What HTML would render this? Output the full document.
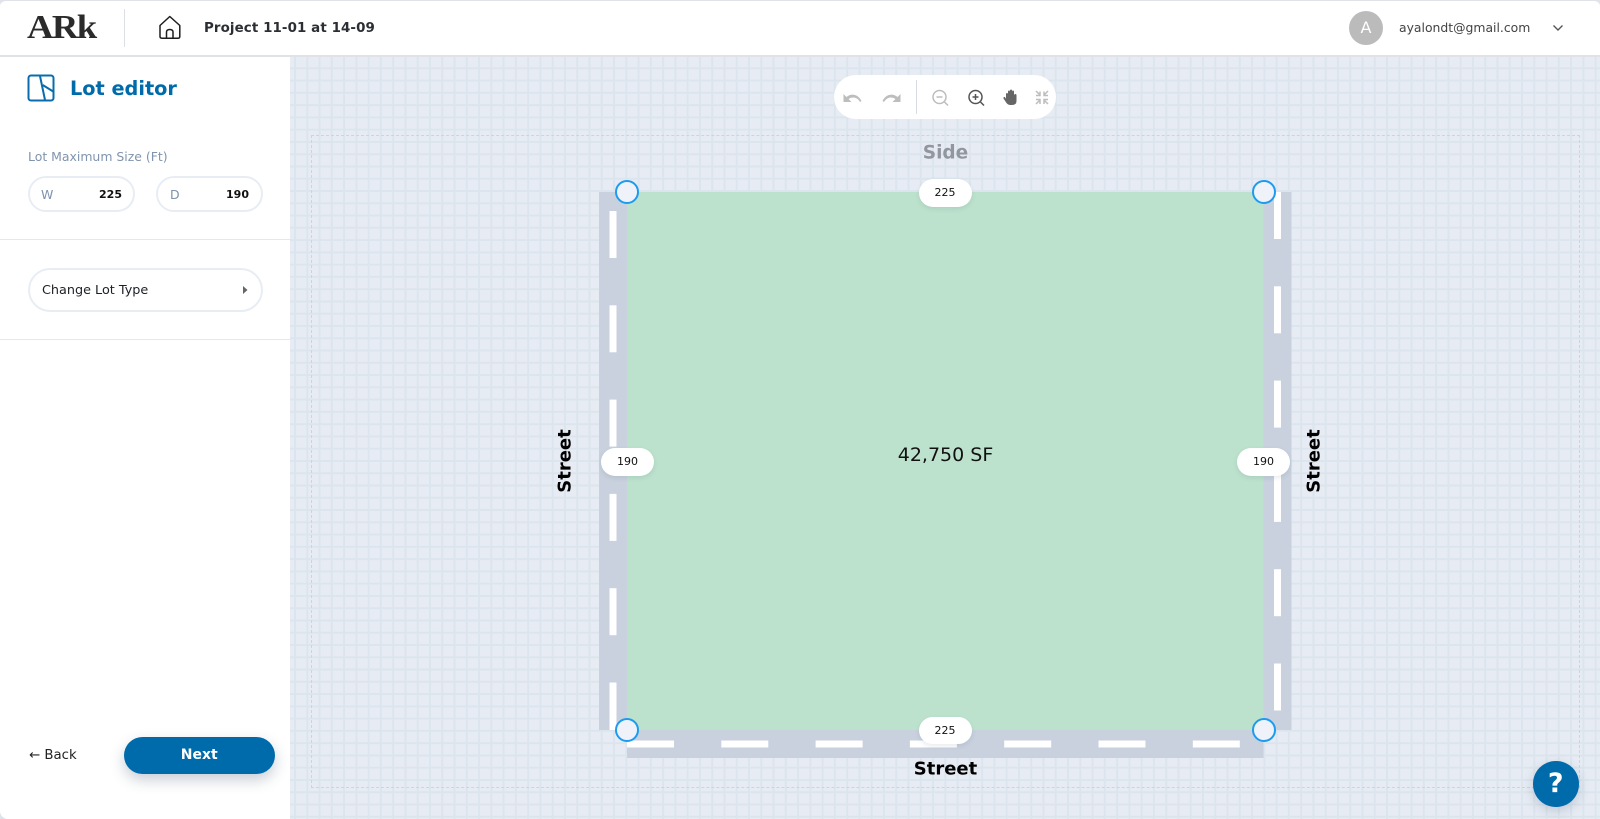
<!DOCTYPE html>
<html><head><meta charset="utf-8"><style>
*{box-sizing:border-box}
html,body{margin:0;padding:0;width:1600px;height:819px;overflow:hidden;background:#dfe4ea}
body{font-family:"DejaVu Sans","Liberation Sans",sans-serif;position:relative}
.a{position:absolute;white-space:nowrap}
.pill{position:absolute;width:53px;height:27.5px;background:#fff;border-radius:14px;font-size:11px;color:#111;text-align:center;line-height:27.5px;box-shadow:0 2px 5px rgba(60,80,110,.12)}
.h{position:absolute;width:24px;height:24px;border-radius:50%;background:#eff3f9;border:2px solid #1c9bf0}
.inp{position:absolute;height:36px;top:176px;width:107px;border:2px solid #e8edf4;border-radius:18px;background:#fff}
.st{font-weight:700;font-size:18px;color:#000;transform:translate(-50%,-50%) rotate(-90deg)}
</style></head><body>
<svg class="a" style="left:290px;top:57px" width="1310" height="762">
<defs><pattern id="g" patternUnits="userSpaceOnUse" width="12.27" height="12.27" x="4" y="10.3"><rect width="12.27" height="12.27" fill="#e7ecf4"/><rect width="2" height="12.27" fill="#dce5ed"/><rect width="12.27" height="2" fill="#dce5ed"/></pattern></defs>
<rect width="1310" height="762" fill="url(#g)"/></svg>
<div class="a" style="left:311px;top:135px;width:1269px;height:653px;border:1px dashed #cfd4db"></div>

<div class="a" style="left:0;top:0;width:1600px;height:57px;background:#fff;border-top:1px solid #dfe3e8;border-bottom:2px solid #dfe3e8;border-radius:6px 6px 0 0"></div>
<div class="a" style="left:0;top:57px;width:290px;height:762px;background:#fff;border-radius:0 0 0 8px"></div>

<div class="a" style="left:27px;top:8px;font-family:'Liberation Serif',serif;font-weight:700;font-size:34px;line-height:40px;color:#2b2b2b;letter-spacing:-1.5px;transform-origin:left center;transform:scaleX(1.08)">ARk</div>
<div class="a" style="left:124px;top:9px;width:1px;height:38px;background:#dcdfe3"></div>
<svg class="a" style="left:158px;top:15px" width="24" height="25" viewBox="0 0 24 25" fill="none" stroke="#1e1e1e" stroke-width="1.5" stroke-linejoin="round"><path d="M2 10.5 11.8 1.5 21.8 10.5V21.5Q21.8 23.2 20 23.2H4Q2 23.2 2 21.5Z"/><path d="M8.500 23V17Q8.500 14.500 11.800 14.500 15 14.500 15 17V23"/></svg>
<div class="a" style="left:204px;top:19px;font-weight:700;font-size:13.4px;line-height:20px;color:#2b2e33;letter-spacing:.1px">Project 11-01 at 14-09</div>

<div class="a" style="left:1349px;top:11px;width:34px;height:34px;border-radius:50%;background:#bbb;color:#fff;font-size:16px;line-height:34px;text-align:center">A</div>
<div class="a" style="left:1399px;top:19px;font-size:12.4px;line-height:18px;color:#444">ayalondt@gmail.com</div>
<svg class="a" style="left:1552px;top:24px" width="12" height="8" viewBox="0 0 12 8" fill="none" stroke="#555" stroke-width="1.4"><path d="M1.500 1.500 6 6 10.500 1.500"/></svg>

<svg class="a" style="left:27px;top:74px" width="28" height="28" viewBox="0 0 28 28" fill="none" stroke="#0a6cad" stroke-width="2"><rect x="1.500" y="1.500" width="25" height="25" rx="2.500"/><path d="M13 2 18 26M15.700 11 27 18"/></svg>
<div class="a" style="left:70px;top:76px;font-weight:700;font-size:19.3px;line-height:26px;color:#006bab">Lot editor</div>

<div class="a" style="left:28px;top:149px;font-size:12.45px;line-height:16px;color:#8094ae">Lot Maximum Size (Ft)</div>
<div class="inp" style="left:28px"></div>
<div class="inp" style="left:156px"></div>
<div class="a" style="left:41px;top:187px;font-size:12.500px;line-height:16px;color:#7d92ad">W</div>
<div class="a" style="left:170px;top:187px;font-size:12.500px;line-height:16px;color:#7d92ad">D</div>
<div class="a" style="right:1478px;top:187px;font-weight:700;font-size:11px;line-height:16px;color:#111">225</div>
<div class="a" style="right:1351px;top:187px;font-weight:700;font-size:11px;line-height:16px;color:#111">190</div>
<div class="a" style="left:0;top:239px;width:290px;height:1px;background:#e4e8ee"></div>
<div class="a" style="left:28px;top:268px;width:235px;height:44px;border:2px solid #e8edf4;border-radius:22px"></div>
<div class="a" style="left:42px;top:283px;font-size:12.800px;line-height:16px;color:#1d2026">Change Lot Type</div>
<svg class="a" style="left:243px;top:286px" width="5" height="8"><path d="M0 0 4.500 4 0 8Z" fill="#666"/></svg>
<div class="a" style="left:0;top:339px;width:290px;height:1px;background:#e4e8ee"></div>
<div class="a" style="left:29px;top:748px;font-size:13.300px;line-height:16px;color:#222">← Back</div>
<div class="a" style="left:124px;top:737px;width:150.500px;height:36.500px;border-radius:18.500px;background:#006bab;color:#fff;text-align:center;font-weight:700;font-size:14px;line-height:36px;box-shadow:0 6px 14px rgba(40,60,90,.25)">Next</div>

<div class="a" style="left:834px;top:75px;width:222px;height:44px;border-radius:22px;background:#fff"></div>
<div class="a" style="left:916px;top:80px;width:1px;height:34px;background:#d8dbdf"></div>
<svg class="a" style="left:834px;top:75px" width="222" height="44" viewBox="834 75 222 44">
<path d="M843.500 94V102H851.500L848.600 99.100C852 96.600 857 96.800 860 102L861.500 101C858 94 851 93 846.500 97Z" fill="#bdbdbd"/>
<path d="M900.500 94V102H892.500L895.400 99.100C892 96.600 887 96.800 884 102L882.500 101C886 94 893 93 897.500 97Z" fill="#bdbdbd"/>
<g fill="none" stroke="#bdbdbd" stroke-width="1.500"><circle cx="939.500" cy="97" r="6.500"/><path d="M936.500 97h6M944.500 102 948 105.500"/></g>
<g fill="none" stroke="#555" stroke-width="1.500"><circle cx="975.500" cy="97" r="6.500"/><path d="M972.500 97h6M975.500 94v6M980.500 102 984 105.500"/></g>
<path d="M1006 99V94Q1006 93 1007 93T1008 94V91.500Q1008 90.500 1009 90.500T1010 91.500V90.500Q1010 89.500 1011 89.500T1012 90.500V91.500Q1012 90.500 1013 90.500T1014 91.500V95Q1014.500 94 1015.500 94T1016.500 95.500V101Q1016.500 105 1012 105H1010.500Q1008 105 1006.500 103L1003.500 98.500Q1003 97.500 1004 97T1006 99Z" fill="#666"/>
<g fill="none" stroke="#bdbdbd" stroke-width="1.500"><path d="M1036 91 1040 95M1040 91.500V95.500H1036M1048 91 1044 95M1044 91.500V95.500H1048M1036 104 1040 100M1040 104V99.500H1036M1048 104 1044 100M1044 104V99.500H1048"/></g>
</svg>

<div class="a" style="left:945.500px;top:153px;transform:translate(-50%,-50%);font-weight:700;font-size:18.500px;color:#92979e">Side</div>

<svg class="a" style="left:590px;top:180px" width="710" height="590" viewBox="590 180 710 590">
<rect x="599" y="192" width="28.500" height="538" fill="#c8d1dd"/>
<rect x="1263" y="192" width="28.500" height="538" fill="#c8d1dd"/>
<rect x="627" y="730" width="636.500" height="28" fill="#c8d1dd"/>
<rect x="627" y="192" width="636.500" height="538" fill="#bce2cd"/>
<g fill="#fff">
<rect x="609.500" y="211" width="7" height="47"/><rect x="609.500" y="305.300" width="7" height="47"/><rect x="609.500" y="399.600" width="7" height="47"/><rect x="609.500" y="493.900" width="7" height="47"/><rect x="609.500" y="588.200" width="7" height="47"/><rect x="609.500" y="682.500" width="7" height="47.500"/>
<rect x="1274" y="192" width="7" height="47"/><rect x="1274" y="286.300" width="7" height="47"/><rect x="1274" y="380.600" width="7" height="47"/><rect x="1274" y="474.900" width="7" height="47"/><rect x="1274" y="569.200" width="7" height="47"/><rect x="1274" y="663.500" width="7" height="47"/>
<rect x="627" y="740.500" width="47" height="7"/><rect x="721.300" y="740.500" width="47" height="7"/><rect x="815.600" y="740.500" width="47" height="7"/><rect x="909.900" y="740.500" width="47" height="7"/><rect x="1004.200" y="740.500" width="47" height="7"/><rect x="1098.500" y="740.500" width="47" height="7"/><rect x="1192.800" y="740.500" width="47" height="7"/>
</g></svg>

<div class="h" style="left:615px;top:180px"></div>
<div class="h" style="left:1251.500px;top:180px"></div>
<div class="h" style="left:615px;top:718px"></div>
<div class="h" style="left:1251.500px;top:718px"></div>

<div class="pill" style="left:918.500px;top:179px">225</div>
<div class="pill" style="left:918.500px;top:716.500px">225</div>
<div class="pill" style="left:601px;top:448px">190</div>
<div class="pill" style="left:1237px;top:448px">190</div>

<div class="a" style="left:945.500px;top:455px;transform:translate(-50%,-50%);font-size:19px;color:#111">42,750 SF</div>
<div class="a st" style="left:565px;top:461px">Street</div>
<div class="a st" style="left:1314px;top:461px">Street</div>
<div class="a" style="left:945.500px;top:769px;transform:translate(-50%,-50%);font-weight:700;font-size:18px;color:#000">Street</div>

<div class="a" style="left:1533px;top:761px;width:45.500px;height:45.500px;border-radius:50%;background:#006bab;color:#fff;text-align:center;font-weight:700;font-size:27px;line-height:45px;box-shadow:0 4px 12px rgba(40,60,90,.2)">?</div>
</body></html>
